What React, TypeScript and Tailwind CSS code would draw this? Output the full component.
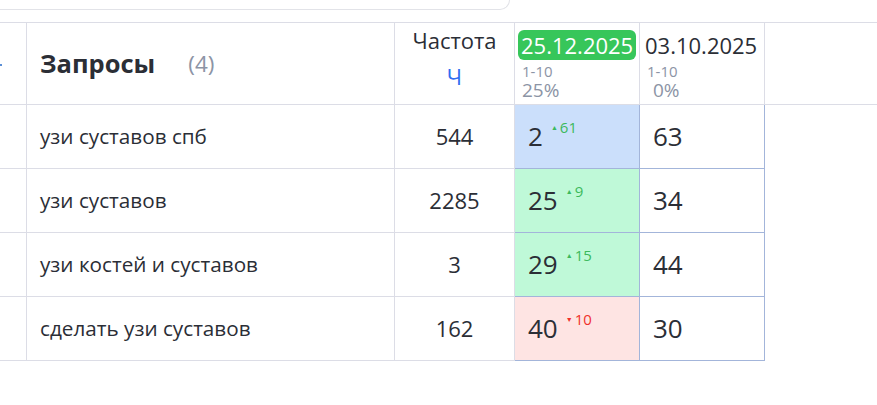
import React from "react";

interface Row {
    query: string,
    freq: number,
    pos: number,
    delta: number,
    prev: number,
    tone: "blue" | "green" | "red"
}

const rows: Row[] = [
    {query: "узи суставов спб", freq: 544, pos: 2, delta: 61, prev: 63, tone: "blue"},
    {query: "узи суставов", freq: 2285, pos: 25, delta: 9, prev: 34, tone: "green"},
    {query: "узи костей и суставов", freq: 3, pos: 29, delta: 15, prev: 44, tone: "green"},
    {query: "сделать узи суставов", freq: 162, pos: 40, delta: -10, prev: 30, tone: "red"},
];

const toneClasses = {
    blue: "bg-[#cbdffb]",
    green: "bg-[#bff9d8]",
    red: "bg-[#fee4e3]",
};

const Delta: React.FC<{ value: number }> = ({value}) => {
    const up = value > 0;
    return (
        <span className={"ml-[8px] -mt-[18px] flex items-center text-[15px] leading-none " + (up ? "text-[#3cb95c]" : "text-[#f0312c]")}>
            <span className="text-[7px] mr-[2px]">{up ? "▲" : "▼"}</span>
            {Math.abs(value)}
        </span>
    );
}

const App: React.FC = () => {
    return (
        <div className="w-[877px] h-[405px] bg-white overflow-hidden text-[#2b2e36]"
             style={{fontFamily: "'Open Sans', 'Noto Sans', sans-serif"}}>
            <div className="w-[510px] h-[10px] border-b border-r border-[#e2e3e8] rounded-br-[10px]"></div>
            <div className="mt-[12px] border-t border-[#dcdde6]">
                {/* header */}
                <div className="flex h-[82px] border-b border-[#dcdde6]">
                    <div className="w-[27px] border-r border-[#dcdde6] flex items-center">
                        <span className="w-[2px] h-[2px] mt-[3px] bg-[#5b8fd6]"></span>
                    </div>
                    <div className="w-[368px] border-r border-[#dcdde6] flex items-center pl-[13px]">
                        <span className="text-[25.5px] font-bold">Запросы</span>
                        <span className="ml-[33px] text-[22.5px] text-[#8c94a5]">(4)</span>
                    </div>
                    <div className="w-[120px] border-r border-[#dcdde6] flex flex-col items-center pt-[4px]">
                        <span className="text-[22px] leading-[26px]">Частота</span>
                        <span className="text-[22px] leading-[26px] mt-[10px] text-[#2f6df0]">Ч</span>
                    </div>
                    <div className="w-[125px] border-r border-[#dcdde6] flex flex-col pt-[7px] px-[3px]">
                        <span className="bg-[#37c65a] text-white text-[22px] leading-[30px] rounded-[6px] px-[3px] w-fit">25.12.2025</span>
                        <span className="pl-[4px] mt-[3px] text-[15px] leading-[16px] text-[#8c94a5]">1-10</span>
                        <span className="pl-[4px] mt-[1px] text-[19px] leading-[20px] text-[#8c94a5]">25%</span>
                    </div>
                    <div className="w-[125px] border-r border-[#dcdde6] flex flex-col pt-[7px] px-[5px]">
                        <span className="text-[22px] leading-[30px]">03.10.2025</span>
                        <span className="pl-[2px] mt-[3px] text-[15px] leading-[16px] text-[#8c94a5]">1-10</span>
                        <span className="pl-[8px] mt-[1px] text-[19px] leading-[20px] text-[#8c94a5]">0%</span>
                    </div>
                    <div className="flex-1"></div>
                </div>
                {rows.map((r) => (
                    <div key={r.query} className="flex h-[64px]">
                        <div className="w-[27px] border-r border-b border-[#dcdde6]"></div>
                        <div className="w-[368px] border-r border-b border-[#dcdde6] flex items-center pl-[13px] text-[20.7px]">
                            {r.query}
                        </div>
                        <div className="w-[120px] border-r border-b border-[#dcdde6] flex items-center justify-center text-[22px]">
                            {r.freq}
                        </div>
                        <div className={"w-[125px] border-r border-b border-[#a3b5da] flex items-center pl-[13px] " + toneClasses[r.tone]}>
                            <span className="text-[26px]">{r.pos}</span>
                            <Delta value={r.delta}/>
                        </div>
                        <div className="w-[125px] border-r border-b border-[#a3b5da] flex items-center pl-[13px] text-[26px]">
                            {r.prev}
                        </div>
                        <div className="flex-1"></div>
                    </div>
                ))}
            </div>
        </div>
    );
}

export default App;
